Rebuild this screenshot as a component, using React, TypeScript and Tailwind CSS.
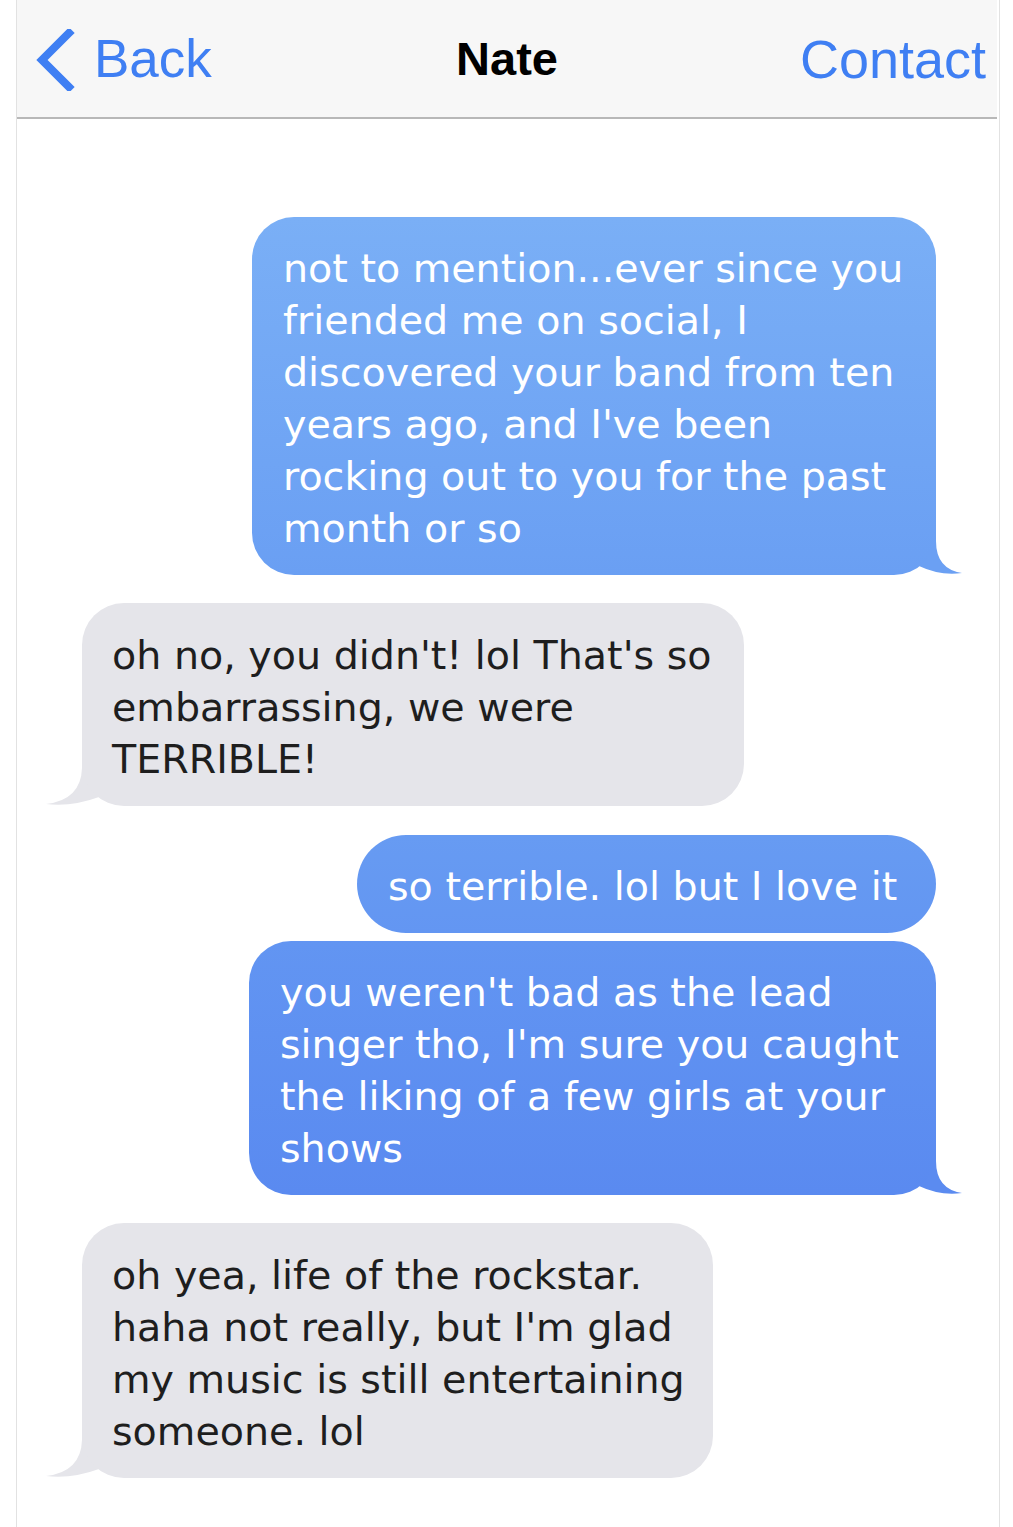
import React from "react";

const bodyFont = { fontFamily: '"DejaVu Sans", Verdana, sans-serif' };

function RightTail({ color }: { color: string }) {
  return (
    <svg
      className="absolute right-[-28px] bottom-0"
      width="70"
      height="50"
      viewBox="0 0 70 50"
    >
      <path d="M20 8 L42 8 L42 16 Q42 44 68 48 Q46 51 25 41 L20 30 Z" fill={color} />
    </svg>
  );
}

function LeftTail({ color }: { color: string }) {
  return (
    <svg
      className="absolute left-[-40px] bottom-0"
      width="80"
      height="50"
      viewBox="0 0 80 50"
    >
      <path d="M60 8 L40 8 L40 12 Q39 44 4 48 Q30 51 57 41 L60 30 Z" fill={color} />
    </svg>
  );
}

function Lines({ lines }: { lines: string[] }) {
  return (
    <>
      {lines.map((l, i) => (
        <div key={i} className="whitespace-nowrap h-[52px] leading-[52px]">
          {l}
        </div>
      ))}
    </>
  );
}

export default function App() {
  return (
    <div className="min-h-[1527px] w-[1013px] bg-white">
      <div className="ml-[16px] w-[984px] min-h-[1527px] border-x border-[#e2e2e2]">
        {/* Header */}
        <div
          className="h-[119px] bg-[#f7f7f7] border-b-2 border-[#b8b8b8] grid grid-cols-[1fr_auto_1fr] items-center mr-[2px]"
          style={{ fontFamily: '"Liberation Sans", Arial, sans-serif' }}
        >
          <div className="flex items-center pl-[18px] text-[#3f7ff3]">
            <svg width="40" height="62" viewBox="0 0 40 62" className="mt-[2px]">
              <path
                d="M34 4 L7 31 L34 58"
                fill="none"
                stroke="#3f7ff3"
                strokeWidth="8"
                strokeLinecap="square"
              />
            </svg>
            <span className="ml-[19px] text-[53px] leading-none">Back</span>
          </div>
          <div className="text-[47px] font-bold text-black leading-none">Nate</div>
          <div className="flex justify-end pr-[11px] text-[54px] text-[#3f7ff3] leading-none">
            Contact
          </div>
        </div>

        {/* Messages */}
        <div className="flex flex-col pt-[98px] text-[39.6px]" style={bodyFont}>
          <div className="self-end mr-[63px] relative">
            <RightTail color="#6ba0f3" />
            <div className="relative w-[684px] rounded-[42px] bg-linear-to-b from-[#7aaff6] to-[#6a9ff3] text-white pl-[31px] pt-[25px] pb-[21px]">
              <Lines
                lines={[
                  "not to mention...ever since you",
                  "friended me on social, I",
                  "discovered your band from ten",
                  "years ago, and I've been",
                  "rocking out to you for the past",
                  "month or so",
                ]}
              />
            </div>
          </div>

          <div className="self-start ml-[65px] mt-[28px] relative">
            <LeftTail color="#e5e5ea" />
            <div className="relative w-[662px] rounded-[42px] bg-[#e5e5ea] text-[#1e1e1e] pl-[30px] pt-[26px] pb-[21px]">
              <Lines
                lines={[
                  "oh no, you didn't! lol That's so",
                  "embarrassing, we were",
                  "TERRIBLE!",
                ]}
              />
            </div>
          </div>

          <div className="self-end mr-[63px] mt-[29px]">
            <div className="w-[579px] rounded-[49px] bg-linear-to-b from-[#679bf2] to-[#6396f2] text-white pl-[31px] pt-[25px] pb-[21px]">
              <Lines lines={["so terrible. lol but I love it"]} />
            </div>
          </div>

          <div className="self-end mr-[63px] mt-[8px] relative">
            <RightTail color="#5b8bf0" />
            <div className="relative w-[687px] rounded-[42px] bg-linear-to-b from-[#6295f2] to-[#5a8af0] text-white pl-[31px] pt-[25px] pb-[21px]">
              <Lines
                lines={[
                  "you weren't bad as the lead",
                  "singer tho, I'm sure you caught",
                  "the liking of a few girls at your",
                  "shows",
                ]}
              />
            </div>
          </div>

          <div className="self-start ml-[65px] mt-[28px] relative">
            <LeftTail color="#e5e5ea" />
            <div className="relative w-[631px] rounded-[42px] bg-[#e5e5ea] text-[#1e1e1e] pl-[30px] pt-[26px] pb-[21px]">
              <Lines
                lines={[
                  "oh yea, life of the rockstar.",
                  "haha not really, but I'm glad",
                  "my music is still entertaining",
                  "someone. lol",
                ]}
              />
            </div>
          </div>
        </div>
      </div>
    </div>
  );
}
